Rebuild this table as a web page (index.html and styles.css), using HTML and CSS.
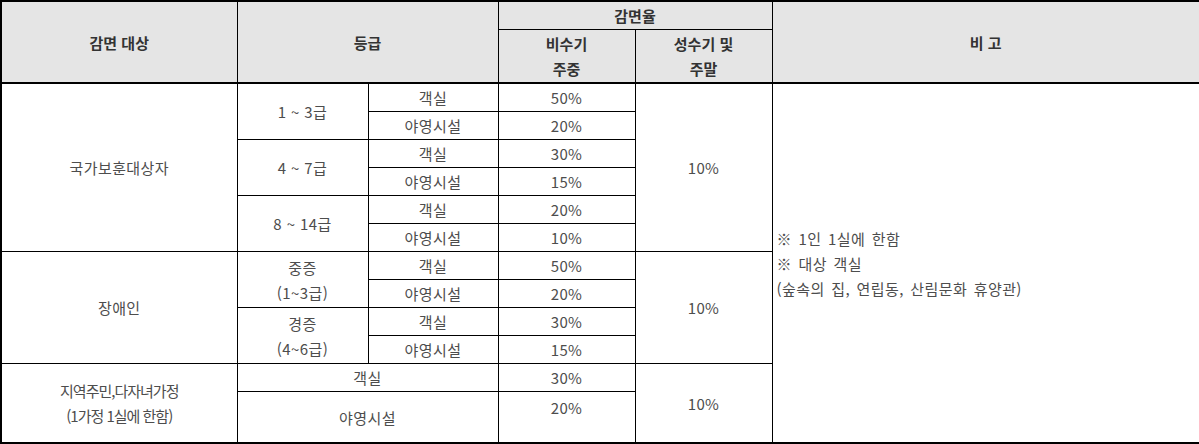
FILE: index.html
```html
<!DOCTYPE html>
<html lang="ko">
<head>
<meta charset="utf-8">
<link rel="stylesheet" href="styles.css">
</head>
<body>
<table class="rate">
  <colgroup>
    <col class="c1"><col class="c2"><col class="c3"><col class="c4"><col class="c5"><col class="c6">
  </colgroup>
  <thead>
    <tr class="h1">
      <th rowspan="2">감면 대상</th>
      <th rowspan="2" colspan="2">등급</th>
      <th colspan="2">감면율</th>
      <th rowspan="2">비 고</th>
    </tr>
    <tr class="h2">
      <th>비수기<br>주중</th>
      <th>성수기 및<br>주말</th>
    </tr>
  </thead>
  <tbody>
    <tr>
      <td rowspan="6">국가보훈대상자</td>
      <td rowspan="2">1 ~ 3급</td>
      <td>객실</td>
      <td>50%</td>
      <td rowspan="6">10%</td>
      <td rowspan="12" class="note">※ 1인 1실에 한함<br>※ 대상 객실<br>(숲속의 집, 연립동, 산림문화 휴양관)</td>
    </tr>
    <tr><td>야영시설</td><td>20%</td></tr>
    <tr><td rowspan="2">4 ~ 7급</td><td>객실</td><td>30%</td></tr>
    <tr><td>야영시설</td><td>15%</td></tr>
    <tr><td rowspan="2">8 ~ 14급</td><td>객실</td><td>20%</td></tr>
    <tr><td>야영시설</td><td>10%</td></tr>
    <tr>
      <td rowspan="4">장애인</td>
      <td rowspan="2">중증<br>(1~3급)</td>
      <td>객실</td>
      <td>50%</td>
      <td rowspan="4">10%</td>
    </tr>
    <tr><td>야영시설</td><td>20%</td></tr>
    <tr><td rowspan="2">경증<br>(4~6급)</td><td>객실</td><td>30%</td></tr>
    <tr><td>야영시설</td><td>15%</td></tr>
    <tr>
      <td rowspan="2" class="tight">지역주민,다자녀가정<br>(1가정 1실에 한함)</td>
      <td colspan="2">객실</td>
      <td>30%</td>
      <td rowspan="2">10%</td>
    </tr>
    <tr class="last"><td colspan="2">야영시설</td><td class="top">20%</td></tr>
  </tbody>
</table>
</body>
</html>
```

FILE: styles.css
```css
html, body {
  margin: 0;
  padding: 0;
  background: #fff;
}
body {
  font-family: "Noto Sans CJK KR", "Noto Sans", sans-serif;
  font-size: 15px;
  color: #4d4d4d;
}
.rate {
  border-collapse: collapse;
  width: 1199px;
  table-layout: fixed;
  border: 2px solid #000;
}
.c1 { width: 236px; }
.c2 { width: 131px; }
.c3 { width: 130px; }
.c4 { width: 137px; }
.c5 { width: 137px; }
.c6 { width: 428px; }
.rate th, .rate td {
  border: 1px solid #000;
  padding: 1px 4px;
  line-height: 25px;
  text-align: center;
  vertical-align: middle;
}
.rate th {
  background: #e5e5e5;
  color: #333;
  font-weight: 700;
}
.rate thead tr.h2 th {
  border-bottom: 2px solid #000;
}
.rate thead tr.h1 th[rowspan] {
  border-bottom: 2px solid #000;
}
.rate td {
  height: 25px;
  letter-spacing: 0.4px;
}
.rate td.note {
  text-align: left;
  word-spacing: 2px;
}
.rate td.tight { letter-spacing: -1px; }
.rate tr.last td { height: 46px; }
.rate td.top { vertical-align: top; padding-top: 3px; }
```
